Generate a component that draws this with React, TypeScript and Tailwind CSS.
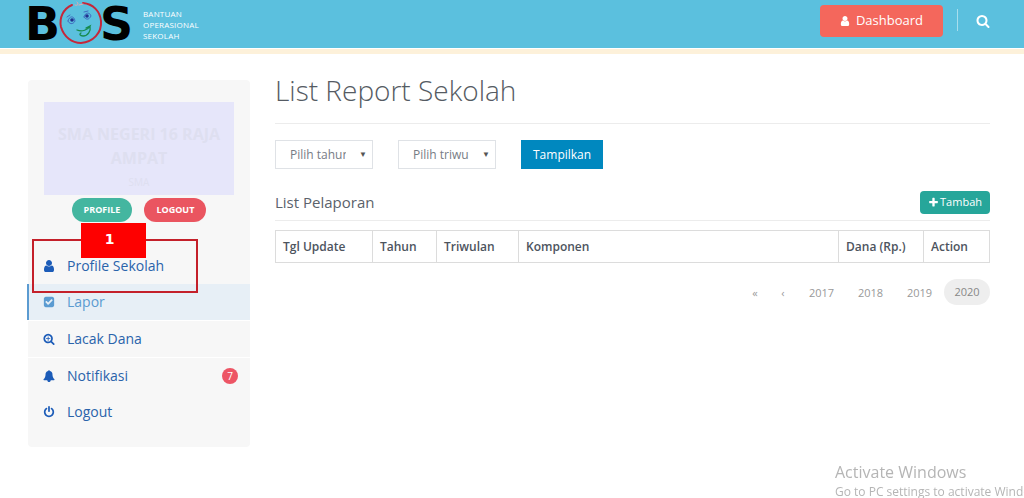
import clsx from "clsx";

const SEARCH_RING = "M1216 832q0-185-131.5-316.5t-316.5-131.5-316.5 131.5-131.5 316.5 131.5 316.5 316.5 131.5 316.5-131.5 131.5-316.5zm512 832q0 52-38 90t-90 38q-54 0-90-38l-343-342q-179 124-399 124-143 0-273.5-55.5t-225-150-150-225-55.5-273.5 55.5-273.5 150-225 225-150 273.5-55.5 273.5 55.5 225 150 150 225 55.5 273.5q0 220-124 399l343 343q37 37 37 90z";

const icons = {
    user: "M1536 1399q0 109-62.5 187t-150.5 78h-854q-88 0-150.5-78t-62.5-187q0-85 8.5-160.5t31.5-152 58.5-131 94-89 134.5-34.5q131 128 313 128t313-128q76 0 134.5 34.5t94 89 58.5 131 31.5 152 8.5 160.5zm-256-887q0 159-112.5 271.5t-271.5 112.5-271.5-112.5-112.5-271.5 112.5-271.5 271.5-112.5 271.5 112.5 112.5 271.5z",
    search: SEARCH_RING,
    searchPlus: "M1088 800v64q0 13-9.5 22.5t-22.5 9.5h-224v224q0 13-9.5 22.5t-22.5 9.5h-64q-13 0-22.5-9.5t-9.5-22.5v-224h-224q-13 0-22.5-9.5t-9.5-22.5v-64q0-13 9.5-22.5t22.5-9.5h224v-224q0-13 9.5-22.5t22.5-9.5h64q13 0 22.5 9.5t9.5 22.5v224h224q13 0 22.5 9.5t9.5 22.5z" + SEARCH_RING,
    check: "M813 1299l614-614q19-19 19-45t-19-45l-102-102q-19-19-45-19t-45 19l-467 467-211-211q-19-19-45-19t-45 19l-102 102q-19 19-19 45t19 45l358 358q19 19 45 19t45-19zm851-883v960q0 119-84.5 203.5t-203.5 84.5h-960q-119 0-203.5-84.5t-84.5-203.5v-960q0-119 84.5-203.5t203.5-84.5h960q119 0 203.5 84.5t84.5 203.5z",
    power: "M1664 896q0 156-61 298t-164 245-245 164-298 61-298-61-245-164-164-245-61-298q0-182 80.5-343t226.5-270q43-32 95.5-25t83.5 50q32 42 24.5 94.5t-49.5 84.5q-98 74-151.5 181t-53.5 228q0 104 40.5 198.5t109.5 163.5 163.5 109.5 198.5 40.5 198.5-40.5 163.5-109.5 109.5-163.5 40.5-198.5q0-121-53.5-228t-151.5-181q-42-32-49.5-84.5t24.5-94.5q31-43 84-50t95 25q146 109 226.5 270t80.5 343zm-640-768v640q0 52-38 90t-90 38-90-38-38-90v-640q0-52 38-90t90-38 90 38 38 90z",
    bell: "M1728 1408q0 52-38 90t-90 38h-448q0 106-75 181t-181 75-181-75-75-181h-448q-52 0-90-38t-38-90q50-42 91-88t85-119.5 74.5-158.5 50-206 19.5-260q0-152 117-282.5t307-158.5q-8-19-8-39 0-40 28-68t68-28 68 28 28 68q0 20-8 39 190 28 307 158.5t117 282.5q0 139 19.5 260t50 206 74.5 158.5 85 119.5 91 88z",
    plus: "M1600 736v192q0 40-28 68t-68 28h-416v416q0 40-28 68t-68 28h-192q-40 0-68-28t-28-68v-416h-416q-40 0-68-28t-28-68v-192q0-40 28-68t68-28h416v-416q0-40 28-68t68-28h192q40 0 68 28t28 68v416h416q40 0 68 28t28 68z",
}

type IconName = keyof typeof icons

const Icon = ({ name, className }: { name: IconName, className?: string }) => (
    <svg viewBox={name === "user" ? "128 128 1536 1536" : "0 0 1792 1792"} fill="currentColor" fillRule="evenodd" aria-hidden="true" className={clsx("shrink-0", className)}>
        <path d={icons[name]} />
    </svg>
)

const Logo = () => (
    <a href="#" className="flex items-center gap-[7px]">
        <svg viewBox="0 0 108 48" className="h-12 w-[108px] overflow-visible" role="img" aria-label="BOS">
            <g fontFamily="DejaVu Sans" fontWeight="700" fontSize="46" fill="#000">
                <text x="-3" y="40">B</text>
                <text x="72" y="40">S</text>
            </g>
            <g fill="none" strokeLinecap="round">
                <path d="M44 5C35 9 31 18 33 27C36 37 44 43 53 43C65 42 74 33 73 21C72 11 65 4 55 3" stroke="#c5273a" strokeWidth="2" />
                <path d="M47 5C50 6 51 4 49 2M51 5L55 4" stroke="#e6a9b2" strokeWidth="1" />
                <path d="M40 21C41 16 46 15 47 21C45 25 41 24 40 21M56 17C57 12 62 12 63 16C61 20 58 20 56 17M39 17L42 15M56 12L60 11" stroke="#3a55b8" strokeWidth="0.8" />
                <path d="M49 30C54 32 60 30 62 26L58 28M62 26C63 31 60 36 55 36C52 36 51 34 53 33" stroke="#178a4c" strokeWidth="1.3" />
            </g>
            <circle cx="44" cy="20" r="1.8" fill="#20318f" />
            <circle cx="59" cy="16" r="1.8" fill="#20318f" />
        </svg>
        <span className="flex flex-col text-[8px] leading-[11px] tracking-wide text-white">
            <span>BANTUAN</span>
            <span>OPERASIONAL</span>
            <span>SEKOLAH</span>
        </span>
    </a>
)

interface MenuItem {
    label: string,
    icon: IconName,
    active?: boolean,
    line?: boolean,
    badge?: number,
    marker?: string
}

const menu: MenuItem[] = [
    { label: "Profile Sekolah", icon: "user", marker: "1" },
    { label: "Lapor", icon: "check", active: true },
    { label: "Lacak Dana", icon: "searchPlus", line: true },
    { label: "Notifikasi", icon: "bell", line: true, badge: 7 },
    { label: "Logout", icon: "power" },
]

const Sidebar = () => (
    <aside className="w-[222px] shrink-0 rounded bg-[#f7f7f7] pt-[22px] pb-[17px]">
        <div className="mx-4 flex h-[93px] flex-col items-center bg-[#e6e6fa] pt-5 text-center text-[#dedff0]">
            <h2 className="text-base leading-6 font-bold">SMA NEGERI 16 RAJA AMPAT</h2>
            <p className="text-[10px] leading-6">SMA</p>
        </div>
        <div className="mt-[3px] flex justify-center gap-3 text-[9px] font-bold text-white">
            <button className="h-6 rounded-full bg-[#44b6a0] px-3">PROFILE</button>
            <button className="h-6 rounded-full bg-[#ea5560] px-3">LOGOUT</button>
        </div>
        <ul className="mt-[26px]">
            {menu.map((item) => (
                <li key={item.label} className={clsx("relative", item.line && "border-t border-white")}>
                    <a
                        href="#"
                        className={clsx(
                            "flex h-9 items-center pr-3 text-sm",
                            item.active ? "-ml-px border-l-2 border-[#5b9bd1] bg-[#e7eff6] pl-[14px] text-[#5b9bd1]" : "pl-[15px] text-[#2a63ab]"
                        )}
                    >
                        <Icon name={item.icon} className={clsx("mr-3 size-3", !item.active && "text-[#1c5cb8]")} />
                        {item.label}
                        {item.badge && (
                            <span className="ml-auto flex size-4 items-center justify-center rounded-full bg-[#ed5565] text-[10px] text-white">{item.badge}</span>
                        )}
                    </a>
                    {item.marker && (
                        <div className="pointer-events-none absolute -top-[9px] left-1 z-10 h-[54px] w-[166px] border-2 border-[#c4202a]">
                            <span className="absolute -top-[18px] left-[47px] flex h-[35px] w-[65px] items-center justify-center bg-[#fe0000] pr-2 pb-1 font-['DejaVu_Sans'] text-sm font-bold text-white">
                                {item.marker}
                            </span>
                        </div>
                    )}
                </li>
            ))}
        </ul>
    </aside>
)

const Dropdown = ({ label, placeholder }: { label: string, placeholder: string }) => (
    <div className="relative">
        <select aria-label={label} className="h-[29px] w-[98px] appearance-none border border-[#dfe2e6] bg-white pr-[26px] pl-[14px] text-xs text-[#777c85]">
            <option>{placeholder}</option>
        </select>
        <span className="pointer-events-none absolute top-0 right-1.5 text-[8px] leading-[28px] text-[#555]">▼</span>
    </div>
)

const columns = [
    { label: "Tgl Update", width: "w-[97px]" },
    { label: "Tahun", width: "w-16" },
    { label: "Triwulan", width: "w-[82px]" },
    { label: "Komponen", width: "" },
    { label: "Dana (Rp.)", width: "w-[85px]" },
    { label: "Action", width: "w-[66px]" },
]

const years = ["2017", "2018", "2019"]

export default function App() {
    return (
        <div className="font-['Open_Sans',sans-serif] text-[#5b626b]">
            <header className="border-b-[5px] border-[#fdf1da] bg-white">
                <div className="mb-px flex h-12 items-center justify-between bg-[#5bc0de] pr-[34px] pl-7">
                    <Logo />
                    <div className="flex h-full items-start pt-[5px]">
                        <button className="flex h-8 items-center gap-1.5 rounded bg-[#f4675c] px-5 text-[13px] text-white">
                            <Icon name="user" className="size-[10px]" />
                            Dashboard
                        </button>
                        <span className="mt-1 ml-[14px] h-[22px] w-px bg-[#a8deed]" />
                        <button aria-label="Cari" className="mt-[9px] ml-[18px] text-white">
                            <Icon name="search" className="size-[14px]" />
                        </button>
                    </div>
                </div>
            </header>

            <div className="flex items-start gap-[25px] pt-[26px] pr-[34px] pl-7">
                <Sidebar />

                <main className="min-w-0 flex-1">
                    <h1 className="border-b border-[#ececec] pb-[23px] text-[28px] leading-5 font-light text-[#555b63]">List Report Sekolah</h1>

                    <form className="mt-4 flex gap-[25px]" onSubmit={(e) => e.preventDefault()}>
                        <Dropdown label="Tahun" placeholder="Pilih tahun" />
                        <Dropdown label="Triwulan" placeholder="Pilih triwulan" />
                        <button className="h-[29px] bg-[#0088bf] px-3 text-xs text-white">Tampilkan</button>
                    </form>

                    <div className="mt-[22px] flex items-center justify-between border-b border-[#ececec] pb-1.5">
                        <h2 className="text-[15px] leading-[23px]">List Pelaporan</h2>
                        <button className="flex h-[23px] items-center gap-px rounded-sm bg-[#26a69a] px-2 text-[11px] text-white">
                            <Icon name="plus" className="size-[11px]" />
                            Tambah
                        </button>
                    </div>

                    <table className="mt-[9px] w-full table-fixed border-collapse text-left text-xs">
                        <thead>
                            <tr>
                                {columns.map((col) => (
                                    <th key={col.label} className={clsx("h-8 border border-[#dcdcdc] px-[7px] font-semibold whitespace-nowrap text-[#4d545e]", col.width)}>{col.label}</th>
                                ))}
                            </tr>
                        </thead>
                    </table>

                    <nav aria-label="Halaman" className="mt-4 flex justify-end text-[11px] text-[#999]">
                        <a href="#" className="flex h-7 w-7 items-center justify-center">«</a>
                        <a href="#" className="flex h-7 w-7 items-center justify-center">‹</a>
                        {years.map((year) => (
                            <a key={year} href="#" className="flex h-7 w-[49px] items-center justify-center">{year}</a>
                        ))}
                        <a href="#" aria-current="page" className="flex h-[26px] w-[46px] items-center justify-center rounded-full bg-[#eee] text-[#888]">2020</a>
                    </nav>
                </main>
            </div>

            <div className="pointer-events-none fixed right-0 -bottom-1 w-[189px] overflow-hidden whitespace-nowrap text-[#b5b5b5]">
                <p className="text-base leading-5">Activate Windows</p>
                <p className="text-xs leading-5">Go to PC settings to activate Windows.</p>
            </div>
        </div>
    )
}
